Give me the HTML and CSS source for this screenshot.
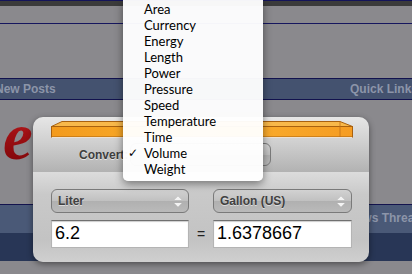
FILE: index.html
```html
<!DOCTYPE html>
<html lang="en">
<head>
    <meta charset="UTF-8" />
    <meta name="viewport" content="width=device-width, initial-scale=1.0"/>
    <title>Unit Converter</title>

    <link rel="stylesheet" href="styles.css">
</head>
<body>
    <div class="forum">
        <div class="topStrip"></div>
        <div class="rule"></div>
        <div class="navBar">
            <span class="navLink newPosts">New Posts</span>
            <span class="navLink quickLinks">Quick Links</span>
        </div>
        <div class="logoArea">
            <span class="logo">me</span>
        </div>
        <div class="threadBar">
            <span class="navLink threads">News Threads</span>
        </div>
        <div class="threadFoot"></div>
    </div>

    <div class="widget">
        <div class="widgetTop">
            <svg class="plate" width="302" height="17" viewBox="0 0 302 17">
                <defs>
                    <linearGradient id="front" x1="0" y1="0" x2="1" y2="0">
                        <stop offset="0" stop-color="#f39a1c"/>
                        <stop offset="0.5" stop-color="#fbb230"/>
                        <stop offset="1" stop-color="#f59c22"/>
                    </linearGradient>
                </defs>
                <polygon points="11,0.5 289,0.5 301.5,5.5 0.5,5.5" fill="#f8b84a" stroke="#a9610f"/>
                <rect x="0.5" y="5.5" width="301" height="10.5" fill="url(#front)" stroke="#a9610f"/>
                <line x1="289" y1="0.5" x2="289" y2="16" stroke="#c07018" stroke-width="0.8"/>
                <line x1="1" y1="16.5" x2="301" y2="16.5" stroke="#fff" stroke-opacity="0.7"/>
            </svg>
            <div class="convertRow">
                <span class="convertLabel">Convert:</span>
                <div class="popup convertPopup"></div>
            </div>
        </div>
        <div class="widgetBottom">
            <div class="popup unit">
                <span>Liter</span>
                <svg class="arrows" width="8" height="11" viewBox="0 0 8 11">
                    <polygon points="0,4 4,0 8,4" fill="#f3f3f3"/>
                    <polygon points="0,7 8,7 4,11" fill="#f3f3f3"/>
                </svg>
            </div>
            <span></span>
            <div class="popup unit">
                <span>Gallon (US)</span>
                <svg class="arrows" width="8" height="11" viewBox="0 0 8 11">
                    <polygon points="0,4 4,0 8,4" fill="#f3f3f3"/>
                    <polygon points="0,7 8,7 4,11" fill="#f3f3f3"/>
                </svg>
            </div>
            <div class="field">6.2</div>
            <span class="equals">=</span>
            <div class="field">1.6378667</div>
        </div>
    </div>

    <ul class="menu">
        <li><span class="mark"></span>Area</li>
        <li><span class="mark"></span>Currency</li>
        <li><span class="mark"></span>Energy</li>
        <li><span class="mark"></span>Length</li>
        <li><span class="mark"></span>Power</li>
        <li><span class="mark"></span>Pressure</li>
        <li><span class="mark"></span>Speed</li>
        <li><span class="mark"></span>Temperature</li>
        <li><span class="mark"></span>Time</li>
        <li><span class="mark">✓</span>Volume</li>
        <li><span class="mark"></span>Weight</li>
    </ul>
</body>
</html>
```

FILE: styles.css
```css
body {
    margin: 0;
    width: 412px;
    height: 274px;
    overflow: hidden;
    position: relative;
    background: #8a898d;
    font-family: "Liberation Sans", Arial, sans-serif;
}

/* forum page behind the widget */
.topStrip {
    height: 5px;
    border-top: 1px solid #14145a;
    background: #3b3b3b;
}

.rule {
    height: 17px;
    border-bottom: 1px solid #16165e;
}

.navBar {
    margin-top: 54px;
    height: 20px;
    border-top: 1px solid #12124e;
    border-bottom: 1px solid #12124e;
    background: #44526f;
    display: flex;
    justify-content: space-between;
    align-items: center;
}

.navLink {
    font-size: 12px;
    font-weight: bold;
    color: #8c95a9;
    white-space: nowrap;
}

.newPosts {
    margin-left: -5px;
}

.quickLinks {
    margin-right: -6px;
}

.logoArea {
    height: 104px;
    padding-top: 3px;
    box-sizing: border-box;
    overflow: hidden;
}

.logo {
    display: inline-block;
    margin-left: -49px;
    font-family: "Liberation Serif", "Times New Roman", serif;
    font-style: italic;
    font-weight: bold;
    font-size: 67px;
    line-height: 1;
    background: linear-gradient(#d02828, #a01014 45%, #7a0508);
    -webkit-background-clip: text;
    background-clip: text;
    color: transparent;
}

.threadBar {
    height: 29px;
    border-top: 1px solid #14144e;
    background: #4a5977;
    display: flex;
    align-items: center;
    padding-left: 347px;
    padding-bottom: 3px;
    box-sizing: border-box;
}

.threadFoot {
    height: 28px;
    background: #283656;
}

/* dashboard widget */
.widget {
    position: absolute;
    left: 33px;
    top: 117px;
    width: 336px;
    height: 145px;
    border-radius: 10px;
    overflow: hidden;
    box-shadow: 0 2px 6px rgba(0, 0, 0, 0.45);
    display: flex;
    flex-direction: column;
}

.widgetTop {
    height: 55px;
    padding: 4px 0 0 18px;
    box-sizing: border-box;
    background: linear-gradient(#e6e6e6, #d0d0d0 45%, #b2b2b2);
}

.plate {
    display: block;
}

.convertRow {
    display: flex;
    align-items: center;
    margin-top: 5px;
    padding-left: 28px;
}

.convertLabel {
    font-size: 12px;
    font-weight: bold;
    color: #3e3e3e;
    text-shadow: 0 1px 0 rgba(255, 255, 255, 0.6);
    width: 51px;
}

.convertPopup {
    width: 141px;
    height: 23px;
}

.widgetBottom {
    flex: 1;
    padding: 17px 0 0 18px;
    background: linear-gradient(#dcdcdc, #c9c9c9 25%, #c3c3c3 75%, #cfcfcf);
    display: grid;
    grid-template-columns: 138px 24px 139px;
    grid-template-rows: 24px 28px;
    row-gap: 7px;
    align-content: start;
}

.popup {
    border: 1px solid #7a7a7a;
    border-radius: 6px;
    background: linear-gradient(#d2d2d2, #c0c0c0 50%, #b0b0b0 51%, #bababa);
    box-sizing: border-box;
}

.unit {
    display: flex;
    align-items: center;
    justify-content: space-between;
    padding: 0 6px 0 6px;
    font-size: 12px;
    font-weight: bold;
    color: #404040;
    text-shadow: 0 1px 0 rgba(255, 255, 255, 0.55);
}

.arrows {
    filter: drop-shadow(0 0 0.5px #888);
}

.field {
    background: #fff;
    border: 1px solid #b4b4b4;
    border-top-color: #707070;
    box-shadow: inset 0 1px 1px rgba(0, 0, 0, 0.2);
    font-size: 18px;
    color: #000;
    padding: 0 0 2px 3px;
    display: flex;
    align-items: center;
}

.equals {
    font-size: 14px;
    color: #222;
    display: flex;
    align-items: center;
    justify-content: center;
}

/* category menu */
.menu {
    position: absolute;
    left: 123px;
    top: 0;
    width: 140px;
    margin: 0;
    padding: 1px 0 4px;
    list-style: none;
    background: rgba(255, 255, 255, 0.96);
    border-radius: 0 0 5px 5px;
    box-shadow: 0 3px 9px rgba(0, 0, 0, 0.45);
    font-family: Lato, "Liberation Sans", sans-serif;
    font-size: 13px;
    color: #000;
}

.menu li {
    display: flex;
    height: 16px;
    line-height: 16px;
}

.mark {
    width: 21px;
    padding-left: 5px;
    box-sizing: border-box;
    font-family: "DejaVu Sans", sans-serif;
    font-size: 12px;
}
```
